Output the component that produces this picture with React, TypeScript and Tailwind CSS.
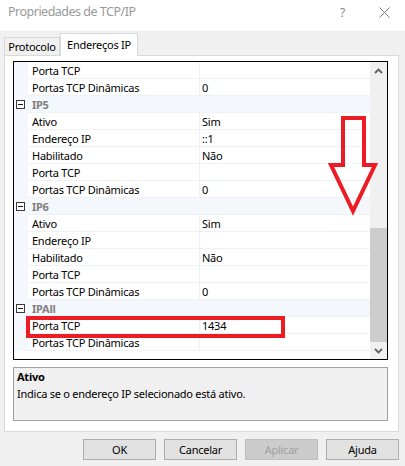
import React from "react";

type Row = { type: "p" | "c"; name: string; value?: string };

const rows: Row[] = [
  { type: "p", name: "Porta TCP", value: "" },
  { type: "p", name: "Portas TCP Dinâmicas", value: "0" },
  { type: "c", name: "IP5" },
  { type: "p", name: "Ativo", value: "Sim" },
  { type: "p", name: "Endereço IP", value: "::1" },
  { type: "p", name: "Habilitado", value: "Não" },
  { type: "p", name: "Porta TCP", value: "" },
  { type: "p", name: "Portas TCP Dinâmicas", value: "0" },
  { type: "c", name: "IP6" },
  { type: "p", name: "Ativo", value: "Sim" },
  { type: "p", name: "Endereço IP", value: "" },
  { type: "p", name: "Habilitado", value: "Não" },
  { type: "p", name: "Porta TCP", value: "" },
  { type: "p", name: "Portas TCP Dinâmicas", value: "0" },
  { type: "c", name: "IPAll" },
  { type: "p", name: "Porta TCP", value: "1434" },
  { type: "p", name: "Portas TCP Dinâmicas", value: "" },
];

function Minus() {
  return (
    <div className="w-[9px] h-[9px] border border-[#3a3a3a] bg-white flex items-center justify-center">
      <div className="w-[5px] h-px bg-[#1a1a1a]" />
    </div>
  );
}

function GridRow({ r }: { r: Row }) {
  if (r.type === "c") {
    return (
      <div className="flex h-[17px] bg-[#f4f7fc]">
        <div className="w-[14px] flex items-center pl-[2px]">
          <Minus />
        </div>
        <div className="flex-1 flex items-center pl-[4px] font-bold text-[#808080] border-b border-[#eef1f6]">
          {r.name}
        </div>
      </div>
    );
  }
  return (
    <div className="flex h-[17px]">
      <div className="w-[14px] bg-[#f4f7fc]" />
      <div className="w-[171px] flex items-center pl-[4px] border-b border-[#eef1f6] text-black whitespace-nowrap">
        {r.name}
      </div>
      <div className="flex-1 flex items-center pl-[2px] border-l border-b border-[#eef1f6] text-black">
        {r.value}
      </div>
    </div>
  );
}

function Chevron({ up }: { up: boolean }) {
  return (
    <svg width="9" height="6" viewBox="0 0 9 6">
      <polyline
        points={up ? "1,5 4.5,1.5 8,5" : "1,1 4.5,4.5 8,1"}
        fill="none"
        stroke="#606060"
        strokeWidth="1.8"
      />
    </svg>
  );
}

export default function App() {
  return (
    <div
      className="relative w-[405px] h-[466px] bg-[#f0f0f0] overflow-hidden text-[11px] tracking-[-0.25px] leading-none"
      style={{ fontFamily: '"Noto Sans", "Open Sans", sans-serif' }}
    >
      {/* Title bar */}
      <div className="h-[31px] bg-white flex items-center justify-between pl-[8px] pr-[15px]">
        <span className="text-[12.5px] tracking-[-0.5px] text-[#999999] pb-[6px]">
          Propriedades de TCP/IP
        </span>
        <div className="flex items-center gap-[34px] pb-[6px]">
          <span className="text-[12px] text-[#8a8a8a]">?</span>
          <svg width="11" height="11" viewBox="0 0 11 11">
            <path d="M0.5 0.5 L10.5 10.5 M10.5 0.5 L0.5 10.5" stroke="#7a7a7a" strokeWidth="1" />
          </svg>
        </div>
      </div>

      {/* Tabs */}
      <div className="h-[24px] flex items-end pl-[4px]">
        <div className="w-[56px] h-[18px] border border-b-0 border-[#d9d9d9] bg-[#f0f0f0] flex items-center justify-center text-black">
          Protocolo
        </div>
        <div className="relative z-10 -mb-px w-[78px] h-[23px] border border-b-0 border-[#d9d9d9] bg-white flex items-center justify-center text-black pb-[2px]">
          Endereços IP
        </div>
      </div>

      {/* Panel */}
      <div className="ml-[4px] w-[395px] h-[377px] border border-[#d9d9d9] bg-white pt-[5px] pl-[8px]">
        {/* Property grid */}
        <div className="w-[375px] h-[299px] border border-black flex">
          <div className="w-[356px] flex flex-col">
            {rows.map((r, i) => (
              <GridRow key={i} r={r} />
            ))}
          </div>
          <div className="w-[17px] flex flex-col bg-[#f0f0f0]">
            <div className="h-[17px] flex items-center justify-center">
              <Chevron up />
            </div>
            <div className="h-[149px]" />
            <div className="h-[114px] bg-[#cdcdcd]" />
            <div className="h-[17px] flex items-center justify-center">
              <Chevron up={false} />
            </div>
          </div>
        </div>

        {/* Description */}
        <div className="mt-[7px] w-[375px] h-[54px] border border-[#a0a0a0] bg-[#f0f0f0] pl-[3px] pt-[2px] flex flex-col gap-[4px] text-black">
          <span className="font-bold leading-[13px]">Ativo</span>
          <span className="leading-[13px]">Indica se o endereço IP selecionado está ativo.</span>
        </div>
      </div>

      {/* Buttons */}
      <div className="mt-[7px] flex justify-end gap-[8px] pr-[6px]">
        {["OK", "Cancelar", "Aplicar", "Ajuda"].map((b) => (
          <div
            key={b}
            className={
              b === "Aplicar"
                ? "w-[73px] h-[21px] border border-[#bfbfbf] bg-[#cccccc] text-[#a0a0a0] flex items-center justify-center"
                : "w-[73px] h-[21px] border border-[#adadad] bg-[#e1e1e1] text-black flex items-center justify-center"
            }
          >
            {b}
          </div>
        ))}
      </div>

      {/* Red annotations */}
      <svg
        className="absolute left-0 top-0 pointer-events-none"
        width="405"
        height="466"
        viewBox="0 0 405 466"
      >
        <path
          d="M343 118 L364 118 L364 165 L375 165 L353 211 L331 165 L343 165 Z"
          fill="none"
          stroke="#ed1c24"
          strokeWidth="4"
        />
        <rect x="28" y="318" width="255" height="18" fill="none" stroke="#ed1c24" strokeWidth="4" />
      </svg>
    </div>
  );
}
